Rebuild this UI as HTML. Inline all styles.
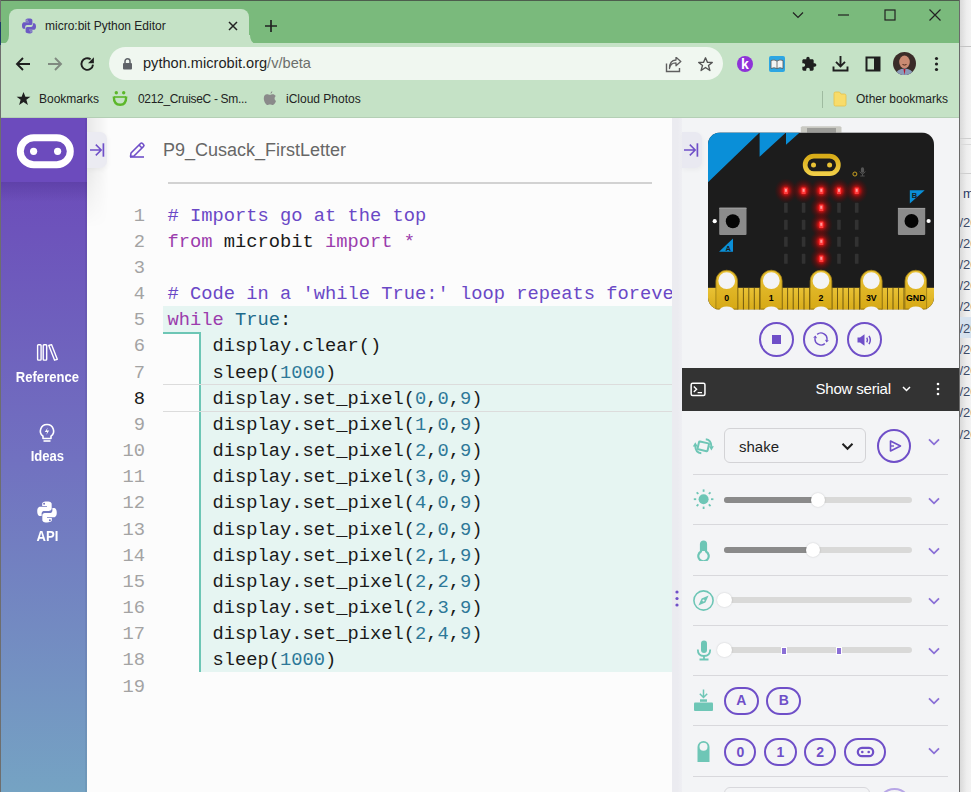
<!DOCTYPE html>
<html><head><meta charset="utf-8">
<style>
*{box-sizing:border-box;margin:0;padding:0}
html,body{width:971px;height:792px;overflow:hidden;background:#f0f0f0;font-family:"Liberation Sans",sans-serif}
.a{position:absolute}
/* chrome */
#frameTop{left:0;top:0;width:960px;height:1px;background:#4d5d4d}
#frameL{left:0;top:0;width:1px;height:792px;background:#6e6e6e}
#frameR{left:959px;top:0;width:1px;height:792px;background:#6a6a6a}
#tabstrip{left:1px;top:1px;width:958px;height:42px;background:#7aba7c}
#toolbar{left:1px;top:42.7px;width:958px;height:75.3px;background:#c5e2c6}
#bmline{left:1px;top:117px;width:958px;height:1px;background:#b4cfb5}
#tab{left:9px;top:9px;width:240px;height:34.7px;background:#c5e2c6;border-radius:8px 8px 0 0}
.tabtxt{font-size:12px;color:#222}
#omni{left:109px;top:47px;width:614px;height:33px;background:#f0f7f0;border-radius:17px}
.bm{font-size:12px;color:#222;top:91.8px}
/* behind window */
#behind{left:960px;top:0;width:11px;height:792px;background:#f4f5f6}
/* page */
#page{left:1px;top:118px;width:958px;height:674px;background:#fcfcfc;overflow:hidden}
#sidebar{left:0;top:0;width:86px;height:674px;background:linear-gradient(to bottom,#6a4cb8 0px,#6c4dba 64px,#7171c0 342px,#75a3c3 674px)}
#sbtop{left:0;top:0;width:86px;height:64px;background:#6c4bbd}
#sbshadow{left:0;top:64px;width:86px;height:22px;background:linear-gradient(to bottom,rgba(60,30,120,.25),rgba(60,30,120,0))}
.sbl{color:#fff;font-weight:bold;font-size:14.5px;width:86px;text-align:center;transform:scaleX(0.9);transform-origin:47px 0}
/* editor */
#editor{left:86px;top:0;width:585px;height:674px;background:#fcfcfc;overflow:hidden}
.code{font-family:"Liberation Mono",monospace;font-size:18.75px;line-height:26.15px;white-space:pre}
.ln{color:#a3a3a3;text-align:right;width:58px}
.k{color:#9b3dad}.c{color:#6a48c6}.n{color:#2d7898}.t{color:#1d6a8b}
/* simulator */
#divider{left:671px;top:0;width:10px;height:674px;background:#ebeaf2}
#sim{left:681px;top:0;width:277px;height:674px;background:#f3f4f6;overflow:hidden}
</style></head>
<body>
<div id="behind" class="a" style="background:linear-gradient(to right,#d9d9d9,#eeeeee 60%,#f3f3f3)"></div><div class="a" style="left:960px;top:46px;width:11px;height:1px;background:#c4c4c4"></div><div class="a" style="left:960px;top:138px;width:11px;height:1px;background:#cfcfcf"></div><div class="a" style="left:960px;top:144px;width:11px;height:1px;background:#dadada"></div><div class="a" style="left:960px;top:173px;width:11px;height:1px;background:#cfcfcf"></div><div class="a" style="left:960px;top:317px;width:11px;height:21px;background:#d6e2ee"></div><div class="a" style="left:963px;top:185.5px;font-size:13px;color:#2b3a66;white-space:nowrap">m</div><div class="a" style="left:959.5px;top:214.5px;font-size:13px;color:#3c4a66;white-space:nowrap">/2023</div><div class="a" style="left:959.5px;top:235.7px;font-size:13px;color:#3c4a66;white-space:nowrap">/2023</div><div class="a" style="left:959.5px;top:256.9px;font-size:13px;color:#3c4a66;white-space:nowrap">/2023</div><div class="a" style="left:959.5px;top:278.1px;font-size:13px;color:#3c4a66;white-space:nowrap">/2023</div><div class="a" style="left:959.5px;top:299.3px;font-size:13px;color:#3c4a66;white-space:nowrap">/2023</div><div class="a" style="left:959.5px;top:320.5px;font-size:13px;color:#3c4a66;white-space:nowrap">/2023</div><div class="a" style="left:959.5px;top:341.7px;font-size:13px;color:#3c4a66;white-space:nowrap">/2023</div><div class="a" style="left:959.5px;top:362.9px;font-size:13px;color:#3c4a66;white-space:nowrap">/2023</div><div class="a" style="left:959.5px;top:384.1px;font-size:13px;color:#3c4a66;white-space:nowrap">/2023</div><div class="a" style="left:959.5px;top:405.3px;font-size:13px;color:#3c4a66;white-space:nowrap">/2023</div><div class="a" style="left:959.5px;top:426.5px;font-size:13px;color:#3c4a66;white-space:nowrap">/2023</div>
<div id="tabstrip" class="a"></div>
<div id="toolbar" class="a"></div>
<div id="bmline" class="a"></div>
<div id="tab" class="a"></div>
<div id="omni" class="a"></div>

<!-- tab curves -->
<svg class="a" style="left:1px;top:34.7px" width="9" height="9"><path d="M0 9 Q8 9 8 0 L8 9 Z" fill="#c5e2c6"/></svg>
<svg class="a" style="left:249px;top:34.7px" width="9" height="9"><path d="M9 9 Q1 9 1 0 L0 0 L0 9 Z" fill="#c5e2c6"/></svg>
<!-- favicon python -->
<svg class="a" style="left:21px;top:18px" width="16" height="16" viewBox="0 0 16 16">
<path d="M7.9 0.6c-3.5 0-3.3 1.5-3.3 1.5v1.6h3.4v0.5H3.3S1 3.9 1 7.4s2 3.4 2 3.4h1.2V9.1s-0.1-2 2-2h3.3s1.9 0 1.9-1.9V2.5S11.7 0.6 7.9 0.6z" fill="#6c5ac4"/>
<path d="M8.1 15.4c3.5 0 3.3-1.5 3.3-1.5v-1.6H8v-0.5h4.7S15 12.1 15 8.6s-2-3.4-2-3.4h-1.2v1.7s0.1 2-2 2H6.5s-1.9 0-1.9 1.9v2.7S4.3 15.4 8.1 15.4z" fill="#6c5ac4"/>
<circle cx="6" cy="2.2" r="0.6" fill="#c5e2c6"/><circle cx="10" cy="13.8" r="0.6" fill="#c5e2c6"/>
</svg>
<div class="a tabtxt" style="left:45px;top:18.8px">micro:bit Python Editor</div>
<svg class="a" style="left:228px;top:21px" width="10" height="10"><path d="M1 1L9 9M9 1L1 9" stroke="#222" stroke-width="1.5"/></svg>
<svg class="a" style="left:264px;top:19px" width="14" height="14"><path d="M7 1V13M1 7H13" stroke="#222" stroke-width="1.7"/></svg>
<!-- window controls -->
<svg class="a" style="left:792px;top:11px" width="12" height="8"><path d="M1 1.5L6 6.5L11 1.5" stroke="#222" stroke-width="1.2" fill="none"/></svg>
<svg class="a" style="left:838px;top:14px" width="11" height="2"><path d="M0 1H11" stroke="#222" stroke-width="1.2"/></svg>
<svg class="a" style="left:884px;top:9px" width="12" height="12"><rect x="1" y="1" width="10" height="10" stroke="#222" stroke-width="1.2" fill="none"/></svg>
<svg class="a" style="left:929px;top:9px" width="12" height="12"><path d="M0.5 0.5L11.5 11.5M11.5 0.5L0.5 11.5" stroke="#222" stroke-width="1.2"/></svg>
<!-- nav -->
<svg class="a" style="left:15px;top:56px" width="16" height="16"><path d="M15 8H2M8 2L2 8L8 14" stroke="#1f1f1f" stroke-width="1.9" fill="none"/></svg>
<svg class="a" style="left:47px;top:56px" width="16" height="16"><path d="M1 8H14M8 2L14 8L8 14" stroke="#808a80" stroke-width="1.9" fill="none"/></svg>
<svg class="a" style="left:79px;top:56px" width="17" height="16"><path d="M11.6 3.3A5.8 5.8 0 1 0 14 8.6" stroke="#1f1f1f" stroke-width="1.9" fill="none"/><path d="M14.9 1.3V7.2H9Z" fill="#1f1f1f"/></svg>
<!-- lock -->
<svg class="a" style="left:122px;top:57px" width="11" height="13"><path d="M3 6V4.2A2.5 2.5 0 0 1 8 4.2V6" stroke="#5f6368" stroke-width="1.5" fill="none"/><rect x="1" y="6" width="9" height="6.5" rx="1" fill="#5f6368"/></svg>
<div class="a" style="left:143px;top:55px;font-size:14.6px;color:#1f1f1f;white-space:nowrap">python.microbit.org<span style="color:#6b6f6b">/v/beta</span></div>
<!-- share & star -->
<svg class="a" style="left:664.5px;top:56.8px" width="17" height="16"><path d="M1.5 6.5V14.5H14.5V11" stroke="#5f5f5f" stroke-width="1.4" fill="none"/><path d="M4.5 11.5C5 7.5 8 5.8 11 5.8V8.8L15.8 4.4L11 0.2V3C6.5 3.2 4.5 7 4.5 11.5Z" stroke="#5f5f5f" stroke-width="1.3" fill="none" stroke-linejoin="round"/></svg>
<svg class="a" style="left:696.5px;top:56px" width="17" height="17" viewBox="0 0 24 24"><path d="M12 2.5L14.8 9H21.6L16.2 13.3L18.2 20.5L12 16.3L5.8 20.5L7.8 13.3L2.4 9H9.2Z" stroke="#555" stroke-width="1.9" fill="none" stroke-linejoin="round"/></svg>
<!-- extension icons -->
<div class="a" style="left:737px;top:56px;width:16px;height:16px;border-radius:50%;background:#8e33d8"></div>
<div class="a" style="left:741px;top:56px;font-size:14px;font-weight:bold;color:#fff;line-height:16px">k</div>
<div class="a" style="left:769px;top:56px;width:16px;height:16px;border-radius:2px;background:#2da6e3"></div>
<svg class="a" style="left:770px;top:58px" width="14" height="12"><path d="M1 2.5Q4 1 7 3Q10 1 13 2.5V10.5Q10 9 7 10.5Q4 9 1 10.5Z" fill="#f4f4f4" stroke="#555" stroke-width="0.8"/><path d="M7 3V10.5" stroke="#555" stroke-width="0.8"/></svg>
<svg class="a" style="left:801px;top:56px" width="16" height="16" viewBox="0 0 24 24"><path d="M20.5 11H19V7c0-1.1-.9-2-2-2h-4V3.5C13 2.12 11.88 1 10.5 1S8 2.12 8 3.5V5H4c-1.1 0-2 .9-2 2v3.8h1.5c1.5 0 2.7 1.2 2.7 2.7S5 16.2 3.5 16.2H2V20c0 1.1.9 2 2 2h3.8v-1.5c0-1.5 1.2-2.7 2.7-2.7s2.7 1.2 2.7 2.7V22H17c1.1 0 2-.9 2-2v-4h1.5c1.380 0 2.5-1.12 2.5-2.5S21.88 11 20.5 11z" fill="#1f1f1f"/></svg>
<svg class="a" style="left:832px;top:55px" width="17" height="17"><path d="M8.5 1V11M4 6.8L8.5 11.3L13 6.8" stroke="#1f1f1f" stroke-width="1.9" fill="none"/><path d="M1.5 11.5V15.5H15.5V11.5" stroke="#1f1f1f" stroke-width="1.9" fill="none"/></svg>
<svg class="a" style="left:865px;top:56px" width="16" height="16"><rect x="1.5" y="1.5" width="13" height="13" stroke="#1f1f1f" stroke-width="2" fill="none"/><rect x="9" y="1.5" width="5.5" height="13" fill="#1f1f1f"/></svg>
<!-- avatar -->
<svg class="a" style="left:893px;top:52px" width="23" height="23" viewBox="0 0 23 23">
<defs><clipPath id="avc"><circle cx="11.5" cy="11.5" r="11.5"/></clipPath></defs>
<g clip-path="url(#avc)"><rect width="23" height="23" fill="#3a2c28"/>
<ellipse cx="11.5" cy="10" rx="5.3" ry="6.5" fill="#c98a72"/>
<path d="M6 6Q11.5 1 17 6Q15 3.5 11.5 3.6Q8 3.5 6 6Z" fill="#5a4035"/>
<path d="M2 23Q4 16.5 11.5 16.5Q19 16.5 21 23Z" fill="#8a9ab8"/>
<path d="M10.5 17L11.5 23L12.5 17Z" fill="#b8102a"/>
<path d="M9.5 12.5Q11.5 13.6 13.5 12.5" stroke="#4a2a20" stroke-width="1" fill="none"/>
</g></svg>
<svg class="a" style="left:934px;top:56px" width="5" height="16"><circle cx="2.5" cy="2.5" r="1.6" fill="#1f1f1f"/><circle cx="2.5" cy="8" r="1.6" fill="#1f1f1f"/><circle cx="2.5" cy="13.5" r="1.6" fill="#1f1f1f"/></svg>
<!-- bookmarks bar -->
<svg class="a" style="left:16px;top:91px" width="15" height="15" viewBox="0 0 24 24"><path d="M12 1.5L15 9H23L16.6 14L19 22.5L12 17.5L5 22.5L7.4 14L1 9H9Z" fill="#1f1f1f"/></svg>
<div class="a bm" style="left:39px">Bookmarks</div>
<svg class="a" style="left:112px;top:90px" width="16" height="16"><circle cx="4.3" cy="2.8" r="1.7" fill="#5cb72a"/><circle cx="11.7" cy="2.8" r="1.7" fill="#5cb72a"/><path d="M1.8 6.5Q1.8 14.8 8.2 14.8Q14.2 14.8 14.2 6.5" stroke="#5cb72a" stroke-width="2.4" fill="none"/><path d="M2 7H14" stroke="#5cb72a" stroke-width="1.6"/></svg>
<div class="a bm" style="left:138px;letter-spacing:-0.32px">0212_CruiseC - Sm...</div>
<svg class="a" style="left:263px;top:90px" width="14" height="16" viewBox="0 0 14 16"><path d="M9.3 1Q9.5 3 7.6 4Q7.3 2.2 9.3 1Z" fill="#8a8a8a"/><path d="M7 4.8C5.8 4.8 5.2 4.2 3.9 4.2C2.2 4.2 0.8 5.6 0.8 8.3C0.8 11.3 2.8 15 4.3 15C5.2 15 5.6 14.4 7 14.4C8.4 14.4 8.8 15 9.8 15C11.2 15 12.5 12.6 13 11.1C11.3 10.3 11 7.4 12.7 6.1C11.9 4.9 10.8 4.3 9.8 4.3C8.6 4.3 8 4.8 7 4.8Z" fill="#8a8a8a"/></svg>
<div class="a bm" style="left:286px">iCloud Photos</div>
<div class="a" style="left:822px;top:91px;width:1px;height:17px;background:#9fbba0"></div>
<svg class="a" style="left:833px;top:91px" width="14" height="16"><path d="M1 2.5Q1 1 2.5 1H6.5L8 3H11.5Q13 3 13 4.5V13.5Q13 15 11.5 15H2.5Q1 15 1 13.5Z" fill="#f8dc6a" stroke="#e5c04a" stroke-width="0.8"/></svg>
<div class="a bm" style="left:856px">Other bookmarks</div>

<div id="frameTop" class="a"></div>
<div id="frameL" class="a"></div><div class="a" style="left:0;top:22px;width:1px;height:23px;background:#1d3a66"></div>
<div id="frameR" class="a"></div>


<div id="pagebg" class="a" style="left:1px;top:118px;width:958px;height:674px;background:#fcfcfc"></div>
<!-- sidebar -->
<div class="a" style="left:1px;top:118px;width:86px;height:674px;background:linear-gradient(to bottom,#6a4cb8 0px,#6c4dba 64px,#7171c0 342px,#75a3c3 674px)"></div>
<div class="a" style="left:1px;top:118px;width:86px;height:64px;background:#6c4bbd"></div>
<div class="a" style="left:1px;top:182px;width:86px;height:20px;background:linear-gradient(to bottom,rgba(50,25,110,.22),rgba(50,25,110,0))"></div>
<svg class="a" style="left:16px;top:134px" width="59" height="35" viewBox="0 0 59 35"><rect x="4.3" y="3.8" width="50" height="27" rx="13.5" stroke="#fff" stroke-width="7" fill="none"/><circle cx="17.6" cy="17.3" r="3.6" fill="#fff"/><circle cx="41.6" cy="17.3" r="3.6" fill="#fff"/></svg>
<svg class="a" style="left:35px;top:343px" width="25" height="19" viewBox="0 0 25 19"><rect x="2.6" y="1.7" width="3.5" height="15.4" rx="0.8" stroke="#fff" stroke-width="1.4" fill="none"/><rect x="8.2" y="1.7" width="3.5" height="15.4" rx="0.8" stroke="#fff" stroke-width="1.4" fill="none"/><path d="M13.8 2.5L16.5 1.6L22.3 16.3L19.6 17.2Z" stroke="#fff" stroke-width="1.4" fill="none" stroke-linejoin="round"/></svg>
<div class="a sbl" style="left:4px;top:368.5px">Reference</div>
<svg class="a" style="left:38px;top:423px" width="18" height="20" viewBox="0 0 18 20"><path d="M9 1.5A6.5 6.5 0 0 0 5 13.2V15.5H13V13.2A6.5 6.5 0 0 0 9 1.5Z" stroke="#fff" stroke-width="1.6" fill="none" stroke-linejoin="round"/><path d="M5.5 18H12.5" stroke="#fff" stroke-width="1.6"/><path d="M9.8 4.5L6.8 9H9.2L8.2 12L11.2 7.5H8.8Z" fill="#fff"/></svg>
<div class="a sbl" style="left:4px;top:448.3px">Ideas</div>
<svg class="a" style="left:36px;top:501px" width="22" height="22" viewBox="0 0 16 16">
<path d="M7.9 0.4c-3.6 0-3.4 1.6-3.4 1.6v1.6h3.5v0.5H3.2S0.9 3.8 0.9 7.4s2 3.5 2 3.5h1.2V9.2s-0.1-2 2-2h3.4s1.9 0 1.9-1.9V2.3S11.8 0.4 7.9 0.4z" fill="#fff"/>
<path d="M8.1 15.6c3.6 0 3.4-1.6 3.4-1.6v-1.6H8v-0.5h4.8S15.1 12.2 15.1 8.6s-2-3.5-2-3.5h-1.2v1.7s0.1 2-2 2H6.5s-1.9 0-1.9 1.9v2.9S4.2 15.6 8.1 15.6z" fill="#fff"/>
<circle cx="5.9" cy="2" r="0.7" fill="#7070bf"/><circle cx="10.1" cy="14" r="0.7" fill="#7070bf"/></svg>
<div class="a sbl" style="left:4px;top:528.3px">API</div>

<div class="a" style="left:85px;top:118px;width:2px;height:674px;background:rgba(0,0,0,.05)"></div>
<!-- editor header -->
<div class="a" style="left:87px;top:118px;width:22px;height:110px;background:linear-gradient(to right,rgba(0,0,0,.08),rgba(0,0,0,0));-webkit-mask-image:linear-gradient(to bottom,#000 45%,transparent)"></div>
<div class="a" style="left:87px;top:132px;width:20px;height:36px;background:#ebebf2;border-radius:0 7px 7px 0;box-shadow:1px 2px 5px rgba(0,0,0,.04)"></div>
<svg class="a" style="left:89px;top:142px" width="16" height="16" viewBox="0 0 16 16"><path d="M1 8H12.5M6.8 2.6L12.2 8L6.8 13.4" stroke="#6f4fc8" stroke-width="1.5" fill="none"/><path d="M14.4 1.3V14.7" stroke="#6f4fc8" stroke-width="1.7"/></svg>
<svg class="a" style="left:128px;top:141px" width="18" height="18" viewBox="0 0 18 18"><path d="M2.5 15.5L3 12L12.5 2.5Q13.5 1.5 14.5 2.5L15.5 3.5Q16.5 4.5 15.5 5.5L6 15Z" stroke="#6f4fc8" stroke-width="1.6" fill="none" stroke-linejoin="round"/><path d="M2 16H16" stroke="#6f4fc8" stroke-width="1.6"/><path d="M11 4L14 7" stroke="#6f4fc8" stroke-width="1.6"/></svg>
<div class="a" style="left:163px;top:140px;font-size:18px;color:#676767;white-space:nowrap">P9_Cusack_FirstLetter</div>
<div class="a" style="left:168px;top:182px;width:484px;height:2px;background:#d2d2d2"></div>
<div class="a" style="left:87px;top:185px;width:585px;height:607px;overflow:hidden">
<div class="a" style="left:76px;top:121px;width:600px;height:26px;background:#e6f5f2"></div>
<div class="a" style="left:114px;top:147px;width:600px;height:340.2px;background:#e6f5f2"></div>
<div class="a" style="left:76px;top:147px;width:38px;height:2px;background:#6dc6b5"></div>
<div class="a" style="left:112px;top:147px;width:2px;height:340.2px;background:#6dc6b5"></div>
<div class="a" style="left:76px;top:199px;width:600px;height:1px;background:#dcdcdc"></div>
<div class="a" style="left:76px;top:226px;width:600px;height:1px;background:#dcdcdc"></div>
<div class="a code ln" style="left:0px;top:17.7px">1
2
3
4
5
6
7
<span style="color:#1a1a1a">8</span>
9
10
11
12
13
14
15
16
17
18
19</div>
<div class="a code" style="left:80.4px;top:17.7px;color:#1a1a1a"><span class="c"># Imports go at the top</span>
<span class="k">from</span> microbit <span class="k">import</span> <span class="k">*</span>

<span class="c"># Code in a 'while True:' loop repeats forever</span>
<span class="k">while</span> <span class="t">True</span>:
    display.clear()
    sleep(<span class="n">1000</span>)
    display.set_pixel(<span class="n">0</span>,<span class="n">0</span>,<span class="n">9</span>)
    display.set_pixel(<span class="n">1</span>,<span class="n">0</span>,<span class="n">9</span>)
    display.set_pixel(<span class="n">2</span>,<span class="n">0</span>,<span class="n">9</span>)
    display.set_pixel(<span class="n">3</span>,<span class="n">0</span>,<span class="n">9</span>)
    display.set_pixel(<span class="n">4</span>,<span class="n">0</span>,<span class="n">9</span>)
    display.set_pixel(<span class="n">2</span>,<span class="n">0</span>,<span class="n">9</span>)
    display.set_pixel(<span class="n">2</span>,<span class="n">1</span>,<span class="n">9</span>)
    display.set_pixel(<span class="n">2</span>,<span class="n">2</span>,<span class="n">9</span>)
    display.set_pixel(<span class="n">2</span>,<span class="n">3</span>,<span class="n">9</span>)
    display.set_pixel(<span class="n">2</span>,<span class="n">4</span>,<span class="n">9</span>)
    sleep(<span class="n">1000</span>)
</div>
</div>
<!-- simulator -->
<div class="a" style="left:672px;top:118px;width:10px;height:674px;background:linear-gradient(to right,#ebebf0 55%,#efeff3)"></div>
<div class="a" style="left:682px;top:118px;width:277px;height:674px;background:#f3f4f6"></div>
<div class="a" style="left:682px;top:132px;width:20px;height:36px;background:#e9e9f1;border-radius:0 7px 7px 0;box-shadow:1px 2px 5px rgba(0,0,0,.04)"></div>
<svg class="a" style="left:683px;top:142px" width="16" height="16" viewBox="0 0 16 16"><path d="M1 8H12.5M6.8 2.6L12.2 8L6.8 13.4" stroke="#6f4fc8" stroke-width="1.5" fill="none"/><path d="M14.4 1.3V14.7" stroke="#6f4fc8" stroke-width="1.7"/></svg>
<svg class="a" style="left:674px;top:589px" width="6" height="20"><circle cx="3" cy="3" r="1.6" fill="#6f4fc8"/><circle cx="3" cy="9.5" r="1.6" fill="#6f4fc8"/><circle cx="3" cy="16" r="1.6" fill="#6f4fc8"/></svg>
<svg class="a" style="left:700px;top:120px" width="245" height="195" viewBox="700 120 245 195">
<defs><radialGradient id="ledg"><stop offset="0" stop-color="#ff1a1a" stop-opacity="1"/><stop offset="0.25" stop-color="#e81010" stop-opacity="0.9"/><stop offset="0.55" stop-color="#a00808" stop-opacity="0.45"/><stop offset="1" stop-color="#600000" stop-opacity="0"/></radialGradient><filter id="glow" x="-200%" y="-200%" width="500%" height="500%"><feGaussianBlur stdDeviation="3.6"/></filter><linearGradient id="gold" x1="0" y1="0" x2="0" y2="1"><stop offset="0" stop-color="#e9c235"/><stop offset="1" stop-color="#d6a916"/></linearGradient><linearGradient id="logoG" x1="0" y1="0" x2="0" y2="1"><stop offset="0" stop-color="#d8ac18"/><stop offset="1" stop-color="#f0ce46"/></linearGradient><clipPath id="bclip"><rect x="708" y="132.4" width="226" height="177" rx="12"/></clipPath></defs>
<path d="M800.8 132.5V127.5L802 126.2H840.3L841.5 127.5V132.5Z" fill="#c9c9c2"/><rect x="807" y="128" width="29" height="4.5" fill="#9c9c98"/>
<g clip-path="url(#bclip)">
<rect x="708" y="132.4" width="226" height="177" fill="#1c1c1c"/>
<path d="M700 132.4H759.6L700 190Z M759.6 132.4H786L759.6 156.8Z M786 132.4H799.7L786 144.8Z" fill="#0a8fd8"/>
<rect x="700" y="287.8" width="245" height="25" fill="url(#gold)"/>
<rect x="737.3" y="287.8" width="1" height="25" fill="#5e4a0c" opacity="0.85"/>
<rect x="742.9" y="287.8" width="1" height="25" fill="#5e4a0c" opacity="0.85"/>
<rect x="748.3" y="287.8" width="1" height="25" fill="#5e4a0c" opacity="0.85"/>
<rect x="753.8" y="287.8" width="1" height="25" fill="#5e4a0c" opacity="0.85"/>
<rect x="759.2" y="287.8" width="1" height="25" fill="#5e4a0c" opacity="0.85"/>
<rect x="781.7" y="287.8" width="1" height="25" fill="#5e4a0c" opacity="0.85"/>
<rect x="787.1" y="287.8" width="1" height="25" fill="#5e4a0c" opacity="0.85"/>
<rect x="792.7" y="287.8" width="1" height="25" fill="#5e4a0c" opacity="0.85"/>
<rect x="798.0" y="287.8" width="1" height="25" fill="#5e4a0c" opacity="0.85"/>
<rect x="803.5" y="287.8" width="1" height="25" fill="#5e4a0c" opacity="0.85"/>
<rect x="809.0" y="287.8" width="1" height="25" fill="#5e4a0c" opacity="0.85"/>
<rect x="831.5" y="287.8" width="1" height="25" fill="#5e4a0c" opacity="0.85"/>
<rect x="837.0" y="287.8" width="1" height="25" fill="#5e4a0c" opacity="0.85"/>
<rect x="842.5" y="287.8" width="1" height="25" fill="#5e4a0c" opacity="0.85"/>
<rect x="848.0" y="287.8" width="1" height="25" fill="#5e4a0c" opacity="0.85"/>
<rect x="853.5" y="287.8" width="1" height="25" fill="#5e4a0c" opacity="0.85"/>
<rect x="859.0" y="287.8" width="1" height="25" fill="#5e4a0c" opacity="0.85"/>
<rect x="881.5" y="287.8" width="1" height="25" fill="#5e4a0c" opacity="0.85"/>
<rect x="887.0" y="287.8" width="1" height="25" fill="#5e4a0c" opacity="0.85"/>
<rect x="892.5" y="287.8" width="1" height="25" fill="#5e4a0c" opacity="0.85"/>
<rect x="898.0" y="287.8" width="1" height="25" fill="#5e4a0c" opacity="0.85"/>
<rect x="903.5" y="287.8" width="1" height="25" fill="#5e4a0c" opacity="0.85"/>
</g>
<path d="M715.9 309V281A10.8 10.8 0 0 1 737.5 281V309Z" fill="url(#gold)" stroke="#9a7a12" stroke-width="0.8"/>
<circle cx="726.7" cy="280.7" r="8.4" fill="#f3f4f6"/>
<ellipse cx="726.7" cy="310.8" rx="7.5" ry="4.3" fill="#f3f4f6"/>
<path d="M760.5 309V281A10.8 10.8 0 0 1 782.1 281V309Z" fill="url(#gold)" stroke="#9a7a12" stroke-width="0.8"/>
<circle cx="771.3" cy="280.7" r="8.4" fill="#f3f4f6"/>
<ellipse cx="771.3" cy="310.8" rx="7.5" ry="4.3" fill="#f3f4f6"/>
<path d="M810.2 309V281A10.8 10.8 0 0 1 831.8 281V309Z" fill="url(#gold)" stroke="#9a7a12" stroke-width="0.8"/>
<circle cx="821.0" cy="280.7" r="8.4" fill="#f3f4f6"/>
<ellipse cx="821.0" cy="310.8" rx="7.5" ry="4.3" fill="#f3f4f6"/>
<path d="M860.5 309V281A10.8 10.8 0 0 1 882.1 281V309Z" fill="url(#gold)" stroke="#9a7a12" stroke-width="0.8"/>
<circle cx="871.3" cy="280.7" r="8.4" fill="#f3f4f6"/>
<ellipse cx="871.3" cy="310.8" rx="7.5" ry="4.3" fill="#f3f4f6"/>
<path d="M905.0 309V281A10.8 10.8 0 0 1 926.6 281V309Z" fill="url(#gold)" stroke="#9a7a12" stroke-width="0.8"/>
<circle cx="915.8" cy="280.7" r="8.4" fill="#f3f4f6"/>
<ellipse cx="915.8" cy="310.8" rx="7.5" ry="4.3" fill="#f3f4f6"/>
<text x="726.7" y="300.6" text-anchor="middle" font-family="Liberation Sans" font-weight="bold" font-size="8.8" fill="#000">0</text>
<text x="771.3" y="300.6" text-anchor="middle" font-family="Liberation Sans" font-weight="bold" font-size="8.8" fill="#000">1</text>
<text x="821.0" y="300.6" text-anchor="middle" font-family="Liberation Sans" font-weight="bold" font-size="8.8" fill="#000">2</text>
<text x="871.3" y="300.6" text-anchor="middle" font-family="Liberation Sans" font-weight="bold" font-size="8.8" fill="#000">3V</text>
<text x="915.8" y="300.6" text-anchor="middle" font-family="Liberation Sans" font-weight="bold" font-size="8.8" fill="#000">GND</text>
<rect x="805.15" y="156.15" width="33.2" height="17.5" rx="8.75" fill="none" stroke="url(#logoG)" stroke-width="4.7"/>
<circle cx="813.5" cy="164.9" r="2.5" fill="#e9c235"/><circle cx="829.6" cy="164.9" r="2.5" fill="#e9c235"/>
<circle cx="854.9" cy="174" r="2" fill="none" stroke="#c9a020" stroke-width="1"/>
<rect x="860.9" y="167.3" width="3.2" height="5.5" rx="1.6" fill="#555"/><path d="M859.6 171.5Q862.5 176 865.4 171.5M862.5 174V176M860.3 176H864.7" stroke="#555" stroke-width="0.9" fill="none"/>
<ellipse cx="785.9" cy="190.8" rx="11.5" ry="12.5" fill="url(#ledg)"/>
<rect x="783.9" y="187.6" width="4" height="6.4" fill="#ff3c3c"/>
<rect x="784.9" y="188.8" width="2" height="3" fill="#ffb0b0" opacity="0.8"/>
<ellipse cx="803.6" cy="190.8" rx="11.5" ry="12.5" fill="url(#ledg)"/>
<rect x="801.6" y="187.6" width="4" height="6.4" fill="#ff3c3c"/>
<rect x="802.6" y="188.8" width="2" height="3" fill="#ffb0b0" opacity="0.8"/>
<ellipse cx="821.3" cy="190.8" rx="11.5" ry="12.5" fill="url(#ledg)"/>
<rect x="819.3" y="187.6" width="4" height="6.4" fill="#ff3c3c"/>
<rect x="820.3" y="188.8" width="2" height="3" fill="#ffb0b0" opacity="0.8"/>
<ellipse cx="839.0" cy="190.8" rx="11.5" ry="12.5" fill="url(#ledg)"/>
<rect x="837.0" y="187.6" width="4" height="6.4" fill="#ff3c3c"/>
<rect x="838.0" y="188.8" width="2" height="3" fill="#ffb0b0" opacity="0.8"/>
<ellipse cx="856.7" cy="190.8" rx="11.5" ry="12.5" fill="url(#ledg)"/>
<rect x="854.7" y="187.6" width="4" height="6.4" fill="#ff3c3c"/>
<rect x="855.7" y="188.8" width="2" height="3" fill="#ffb0b0" opacity="0.8"/>
<rect x="784.1" y="202.8" width="3.6" height="10" rx="0.6" fill="#323232"/>
<rect x="801.8" y="202.8" width="3.6" height="10" rx="0.6" fill="#323232"/>
<ellipse cx="821.3" cy="207.8" rx="11.5" ry="12.5" fill="url(#ledg)"/>
<rect x="819.3" y="204.6" width="4" height="6.4" fill="#ff3c3c"/>
<rect x="820.3" y="205.8" width="2" height="3" fill="#ffb0b0" opacity="0.8"/>
<rect x="837.2" y="202.8" width="3.6" height="10" rx="0.6" fill="#323232"/>
<rect x="854.9" y="202.8" width="3.6" height="10" rx="0.6" fill="#323232"/>
<rect x="784.1" y="219.8" width="3.6" height="10" rx="0.6" fill="#323232"/>
<rect x="801.8" y="219.8" width="3.6" height="10" rx="0.6" fill="#323232"/>
<ellipse cx="821.3" cy="224.8" rx="11.5" ry="12.5" fill="url(#ledg)"/>
<rect x="819.3" y="221.6" width="4" height="6.4" fill="#ff3c3c"/>
<rect x="820.3" y="222.8" width="2" height="3" fill="#ffb0b0" opacity="0.8"/>
<rect x="837.2" y="219.8" width="3.6" height="10" rx="0.6" fill="#323232"/>
<rect x="854.9" y="219.8" width="3.6" height="10" rx="0.6" fill="#323232"/>
<rect x="784.1" y="236.8" width="3.6" height="10" rx="0.6" fill="#323232"/>
<rect x="801.8" y="236.8" width="3.6" height="10" rx="0.6" fill="#323232"/>
<ellipse cx="821.3" cy="241.8" rx="11.5" ry="12.5" fill="url(#ledg)"/>
<rect x="819.3" y="238.6" width="4" height="6.4" fill="#ff3c3c"/>
<rect x="820.3" y="239.8" width="2" height="3" fill="#ffb0b0" opacity="0.8"/>
<rect x="837.2" y="236.8" width="3.6" height="10" rx="0.6" fill="#323232"/>
<rect x="854.9" y="236.8" width="3.6" height="10" rx="0.6" fill="#323232"/>
<rect x="784.1" y="253.8" width="3.6" height="10" rx="0.6" fill="#323232"/>
<rect x="801.8" y="253.8" width="3.6" height="10" rx="0.6" fill="#323232"/>
<ellipse cx="821.3" cy="258.8" rx="11.5" ry="12.5" fill="url(#ledg)"/>
<rect x="819.3" y="255.6" width="4" height="6.4" fill="#ff3c3c"/>
<rect x="820.3" y="256.8" width="2" height="3" fill="#ffb0b0" opacity="0.8"/>
<rect x="837.2" y="253.8" width="3.6" height="10" rx="0.6" fill="#323232"/>
<rect x="854.9" y="253.8" width="3.6" height="10" rx="0.6" fill="#323232"/>
<rect x="719.2" y="207.7" width="27.3" height="27.2" rx="1" fill="#8b8b8b"/>
<rect x="719.2" y="207.7" width="27.3" height="1.2" fill="#9c9c9c"/>
<circle cx="732.8" cy="221.2" r="7" fill="#050505"/>
<circle cx="714.7" cy="221.2" r="2.1" fill="#fff"/>
<rect x="897.9" y="207.9" width="27.3" height="27.2" rx="1" fill="#8b8b8b"/>
<rect x="897.9" y="207.9" width="27.3" height="1.2" fill="#9c9c9c"/>
<circle cx="911.5" cy="221.0" r="7" fill="#050505"/>
<circle cx="928.6" cy="221.0" r="2.1" fill="#fff"/>
<path d="M719 251.8L733 238.6V251.8Z" fill="#0a8fd8"/><text x="728.3" y="250.6" text-anchor="middle" font-family="Liberation Sans" font-weight="bold" font-size="7.5" fill="#1c1c1c">A</text>
<path d="M909.8 190.2H924.7L909.8 203.5Z" fill="#0a8fd8"/><text x="914.4" y="197.6" text-anchor="middle" font-family="Liberation Sans" font-weight="bold" font-size="7.5" fill="#1c1c1c">B</text>
</svg>
<div class="a" style="left:759px;top:322px;width:34.8px;height:34.8px;border-radius:50%;border:2.2px solid #6f4fc8"></div>
<div class="a" style="left:803.1px;top:322px;width:34.8px;height:34.8px;border-radius:50%;border:2.2px solid #6f4fc8"></div>
<div class="a" style="left:847.2px;top:322px;width:34.8px;height:34.8px;border-radius:50%;border:2.2px solid #6f4fc8"></div>
<div class="a" style="left:772px;top:335px;width:9.1px;height:9.1px;background:#6f4fc8"></div>
<svg class="a" style="left:812.5px;top:331.3px" width="16" height="16" viewBox="0 0 16 16"><path d="M4.14 3.4A6 6 0 0 1 13.91 9.04M11.86 12.6A6 6 0 0 1 2.09 6.96" stroke="#6f4fc8" stroke-width="1.4" fill="none"/><path d="M15.88 9.39L11.94 8.69L13.46 11.6Z M0.12 6.61L4.06 7.31L2.54 4.4Z" fill="#6f4fc8"/></svg>
<svg class="a" style="left:856px;top:332.5px" width="17" height="14" viewBox="0 0 17 14"><path d="M1.5 4.5H4L8.5 1.2V12.8L4 9.5H1.5Z" fill="#6f4fc8"/><path d="M10.8 4.6Q12.2 7 10.8 9.4M13 2.8Q15.6 7 13 11.2" stroke="#6f4fc8" stroke-width="1.5" fill="none"/></svg>
<div class="a" style="left:682px;top:368px;width:277px;height:43px;background:#333333"></div>
<svg class="a" style="left:690px;top:381.5px" width="17" height="16" viewBox="0 0 17 16"><rect x="1.15" y="1.15" width="13.8" height="12.4" rx="1.5" stroke="#fff" stroke-width="1.5" fill="none"/><path d="M3.8 4.4L6.6 7.2L3.8 10M7.6 10.6H12" stroke="#fff" stroke-width="1.4" fill="none"/></svg>
<div class="a" style="left:815.5px;top:380px;font-size:15px;color:#fff;letter-spacing:-0.2px;white-space:nowrap">Show serial</div>
<svg class="a" style="left:901.5px;top:385.5px" width="9" height="6"><path d="M1 1L4.5 4.5L8 1" stroke="#fff" stroke-width="1.5" fill="none"/></svg>
<svg class="a" style="left:935px;top:382px" width="5" height="14"><circle cx="3" cy="2" r="1.3" fill="#fff"/><circle cx="3" cy="7" r="1.3" fill="#fff"/><circle cx="3" cy="12" r="1.3" fill="#fff"/></svg>
<svg class="a" style="left:692px;top:437px" width="23" height="19" viewBox="0 0 23 19"><rect x="6.2" y="5.3" width="10.2" height="8" rx="0.8" transform="rotate(13 11.3 9.3)" stroke="#6ec6b6" stroke-width="2" fill="none"/><path d="M13.8 2.3Q19.2 2.8 19.4 9.8" stroke="#6ec6b6" stroke-width="2" fill="none"/><path d="M16.9 9.3H21.9L19.4 13.6Z" fill="#6ec6b6"/><path d="M9.3 16.2Q3.5 15.8 3.3 9" stroke="#6ec6b6" stroke-width="2" fill="none"/><path d="M0.8 9.5H5.8L3.3 5.2Z" fill="#6ec6b6"/></svg>
<div class="a" style="left:724.1px;top:428.2px;width:142.4px;height:35.3px;border:1px solid #d3d3d6;border-radius:6px;background:#f3f4f6"></div>
<div class="a" style="left:739px;top:437.5px;font-size:15px;color:#1f1f1f">shake</div>
<svg class="a" style="left:840.5px;top:442px" width="13" height="9"><path d="M1.5 1.8L6.5 6.8L11.5 1.8" stroke="#1f1f1f" stroke-width="2" fill="none"/></svg>
<div class="a" style="left:876.9px;top:428.7px;width:34.6px;height:34.6px;border-radius:50%;border:2px solid #6f4fc8"></div>
<svg class="a" style="left:888px;top:439px" width="15" height="14"><path d="M2.5 2L12.5 7L2.5 12Z" stroke="#6f4fc8" stroke-width="1.6" fill="none" stroke-linejoin="round"/><path d="M3 7H6" stroke="#6f4fc8" stroke-width="1.4"/></svg>
<svg class="a" style="left:928.2px;top:438.4px" width="12" height="8"><path d="M1 1.3L6 6.3L11 1.3" stroke="#8a6fd6" stroke-width="1.8" fill="none"/></svg>
<div class="a" style="left:693px;top:473.8px;width:255px;height:1.5px;background:#d8d8dc"></div>
<svg class="a" style="left:693px;top:489px" width="22" height="22" viewBox="0 0 22 22"><circle cx="10.6" cy="10.2" r="5" fill="#6ec6b6"/><rect x="9.7" y="0.4" width="1.8" height="2.4" fill="#6ec6b6" transform="rotate(0 10.6 10.2)"/><rect x="9.7" y="0.4" width="1.8" height="2.4" fill="#6ec6b6" transform="rotate(45 10.6 10.2)"/><rect x="9.7" y="0.4" width="1.8" height="2.4" fill="#6ec6b6" transform="rotate(90 10.6 10.2)"/><rect x="9.7" y="0.4" width="1.8" height="2.4" fill="#6ec6b6" transform="rotate(135 10.6 10.2)"/><rect x="9.7" y="0.4" width="1.8" height="2.4" fill="#6ec6b6" transform="rotate(180 10.6 10.2)"/><rect x="9.7" y="0.4" width="1.8" height="2.4" fill="#6ec6b6" transform="rotate(225 10.6 10.2)"/><rect x="9.7" y="0.4" width="1.8" height="2.4" fill="#6ec6b6" transform="rotate(270 10.6 10.2)"/><rect x="9.7" y="0.4" width="1.8" height="2.4" fill="#6ec6b6" transform="rotate(315 10.6 10.2)"/></svg>
<div class="a" style="left:724.3px;top:496.8px;width:187.7px;height:6px;border-radius:3px;background:#d9d9d8"></div>
<div class="a" style="left:724.3px;top:496.8px;width:93.7px;height:6px;border-radius:3px 0 0 3px;background:#8a8a8a"></div>
<div class="a" style="left:810.7px;top:492.5px;width:14.6px;height:14.6px;border-radius:50%;background:#fff;box-shadow:0 0 2px rgba(0,0,0,.18)"></div>
<svg class="a" style="left:928.2px;top:496.5px" width="12" height="8"><path d="M1 1.3L6 6.3L11 1.3" stroke="#8a6fd6" stroke-width="1.8" fill="none"/></svg>
<div class="a" style="left:693px;top:523.8px;width:255px;height:1.5px;background:#d8d8dc"></div>
<svg class="a" style="left:696px;top:540px" width="15" height="21" viewBox="0 0 15 21"><path d="M5 11.5V4A2.5 2.5 0 0 1 10 4V11.5A5.2 5.2 0 1 1 5 11.5Z" stroke="#6ec6b6" stroke-width="2.2" fill="none" stroke-linejoin="round"/><path d="M5.2 3.5A2.3 2.3 0 0 1 9.8 3.5V11H5.2Z" fill="#6ec6b6"/></svg>
<div class="a" style="left:724.3px;top:547.0px;width:187.7px;height:6px;border-radius:3px;background:#d9d9d8"></div>
<div class="a" style="left:724.3px;top:547.0px;width:88.7px;height:6px;border-radius:3px 0 0 3px;background:#8a8a8a"></div>
<div class="a" style="left:805.7px;top:542.7px;width:14.6px;height:14.6px;border-radius:50%;background:#fff;box-shadow:0 0 2px rgba(0,0,0,.18)"></div>
<svg class="a" style="left:928.2px;top:546.5px" width="12" height="8"><path d="M1 1.3L6 6.3L11 1.3" stroke="#8a6fd6" stroke-width="1.8" fill="none"/></svg>
<div class="a" style="left:693px;top:574.8px;width:255px;height:1.5px;background:#d8d8dc"></div>
<svg class="a" style="left:692px;top:589px" width="23" height="23" viewBox="0 0 23 23"><circle cx="11.5" cy="11.5" r="9.6" stroke="#6ec6b6" stroke-width="1.6" fill="none"/><path d="M16.6 6.4L13.4 13.4L6.4 16.6L9.6 9.6Z" fill="#6ec6b6"/><circle cx="11.5" cy="11.5" r="1.1" fill="#f3f4f6"/></svg>
<div class="a" style="left:724.3px;top:597.2px;width:187.7px;height:6px;border-radius:3px;background:#d9d9d8"></div>
<div class="a" style="left:717.0px;top:592.9px;width:14.6px;height:14.6px;border-radius:50%;background:#fff;box-shadow:0 0 2px rgba(0,0,0,.18)"></div>
<svg class="a" style="left:928.2px;top:596.5px" width="12" height="8"><path d="M1 1.3L6 6.3L11 1.3" stroke="#8a6fd6" stroke-width="1.8" fill="none"/></svg>
<div class="a" style="left:693px;top:624.8px;width:255px;height:1.5px;background:#d8d8dc"></div>
<svg class="a" style="left:696px;top:640px" width="16" height="21" viewBox="0 0 16 21"><rect x="5" y="0.5" width="6" height="12.5" rx="3" fill="#6ec6b6"/><path d="M1.8 9.5Q1.8 16 8 16Q14.2 16 14.2 9.5" stroke="#6ec6b6" stroke-width="1.8" fill="none"/><path d="M8 16V19.5M3.5 19.5H12.5" stroke="#6ec6b6" stroke-width="1.8"/></svg>
<div class="a" style="left:724.3px;top:647.2px;width:187.7px;height:6px;border-radius:3px;background:#d9d9d8"></div>
<div class="a" style="left:781.1px;top:646.7px;width:6px;height:8px;background:#8a6fd6;border:1px solid #fff"></div>
<div class="a" style="left:835.8px;top:646.7px;width:6px;height:8px;background:#8a6fd6;border:1px solid #fff"></div>
<div class="a" style="left:717.0px;top:642.9px;width:14.6px;height:14.6px;border-radius:50%;background:#fff;box-shadow:0 0 2px rgba(0,0,0,.18)"></div>
<svg class="a" style="left:928.2px;top:646.5px" width="12" height="8"><path d="M1 1.3L6 6.3L11 1.3" stroke="#8a6fd6" stroke-width="1.8" fill="none"/></svg>
<div class="a" style="left:693px;top:674.8px;width:255px;height:1.5px;background:#d8d8dc"></div>
<svg class="a" style="left:693px;top:689px" width="21" height="23" viewBox="0 0 21 23"><path d="M10.5 0.5V8M6.8 4.8L10.5 8.5L14.2 4.8" stroke="#6ec6b6" stroke-width="1.5" fill="none"/><rect x="7" y="10.3" width="7" height="2.5" fill="#6ec6b6"/><rect x="1" y="13.5" width="19" height="8.5" rx="1" fill="#6ec6b6"/></svg>
<div class="a" style="left:724.1px;top:687.2px;width:34.6px;height:27.4px;border:2px solid #6f4fc8;border-radius:14px;color:#6f4fc8;font-weight:bold;font-size:14px;text-align:center;line-height:23.4px">A</div>
<div class="a" style="left:766.2px;top:687.2px;width:35.3px;height:27.4px;border:2px solid #6f4fc8;border-radius:14px;color:#6f4fc8;font-weight:bold;font-size:14px;text-align:center;line-height:23.4px">B</div>
<svg class="a" style="left:928.2px;top:697.0px" width="12" height="8"><path d="M1 1.3L6 6.3L11 1.3" stroke="#8a6fd6" stroke-width="1.8" fill="none"/></svg>
<div class="a" style="left:693px;top:724.8px;width:255px;height:1.5px;background:#d8d8dc"></div>
<svg class="a" style="left:696px;top:740px" width="15" height="23" viewBox="0 0 15 23"><path d="M1.5 7A6 6 0 0 1 13.5 7V22H1.5Z" fill="#6ec6b6"/><circle cx="7.5" cy="6.8" r="4" fill="#f3f4f6"/></svg>
<div class="a" style="left:724.1px;top:737.5px;width:32.4px;height:28px;border:2px solid #6f4fc8;border-radius:14px;color:#6f4fc8;font-weight:bold;font-size:14px;text-align:center;line-height:24px">0</div>
<div class="a" style="left:764.0px;top:737.5px;width:32.6px;height:28px;border:2px solid #6f4fc8;border-radius:14px;color:#6f4fc8;font-weight:bold;font-size:14px;text-align:center;line-height:24px">1</div>
<div class="a" style="left:804.0px;top:737.5px;width:32.1px;height:28px;border:2px solid #6f4fc8;border-radius:14px;color:#6f4fc8;font-weight:bold;font-size:14px;text-align:center;line-height:24px">2</div>
<div class="a" style="left:844.0px;top:737.5px;width:42.3px;height:28px;border:2px solid #6f4fc8;border-radius:14px;color:#6f4fc8;font-weight:bold;font-size:14px;text-align:center;line-height:24px"></div>
<svg class="a" style="left:856px;top:746px" width="19" height="12" viewBox="0 0 19 12"><rect x="1.8" y="1.8" width="15.4" height="8.4" rx="4.2" stroke="#6f4fc8" stroke-width="2.2" fill="none"/><circle cx="6.3" cy="6" r="1.3" fill="#6f4fc8"/><circle cx="12.7" cy="6" r="1.3" fill="#6f4fc8"/></svg>
<svg class="a" style="left:928.2px;top:747.0px" width="12" height="8"><path d="M1 1.3L6 6.3L11 1.3" stroke="#8a6fd6" stroke-width="1.8" fill="none"/></svg>
<div class="a" style="left:693px;top:775.8px;width:255px;height:1.5px;background:#d8d8dc"></div>
<div class="a" style="left:724.4px;top:787.3px;width:145.3px;height:30px;border:1px solid #d8d8dc;border-radius:6px"></div>
<div class="a" style="left:877px;top:787.5px;width:35px;height:35px;border-radius:50%;border:2px solid #b7a6e6"></div>
</body></html>
